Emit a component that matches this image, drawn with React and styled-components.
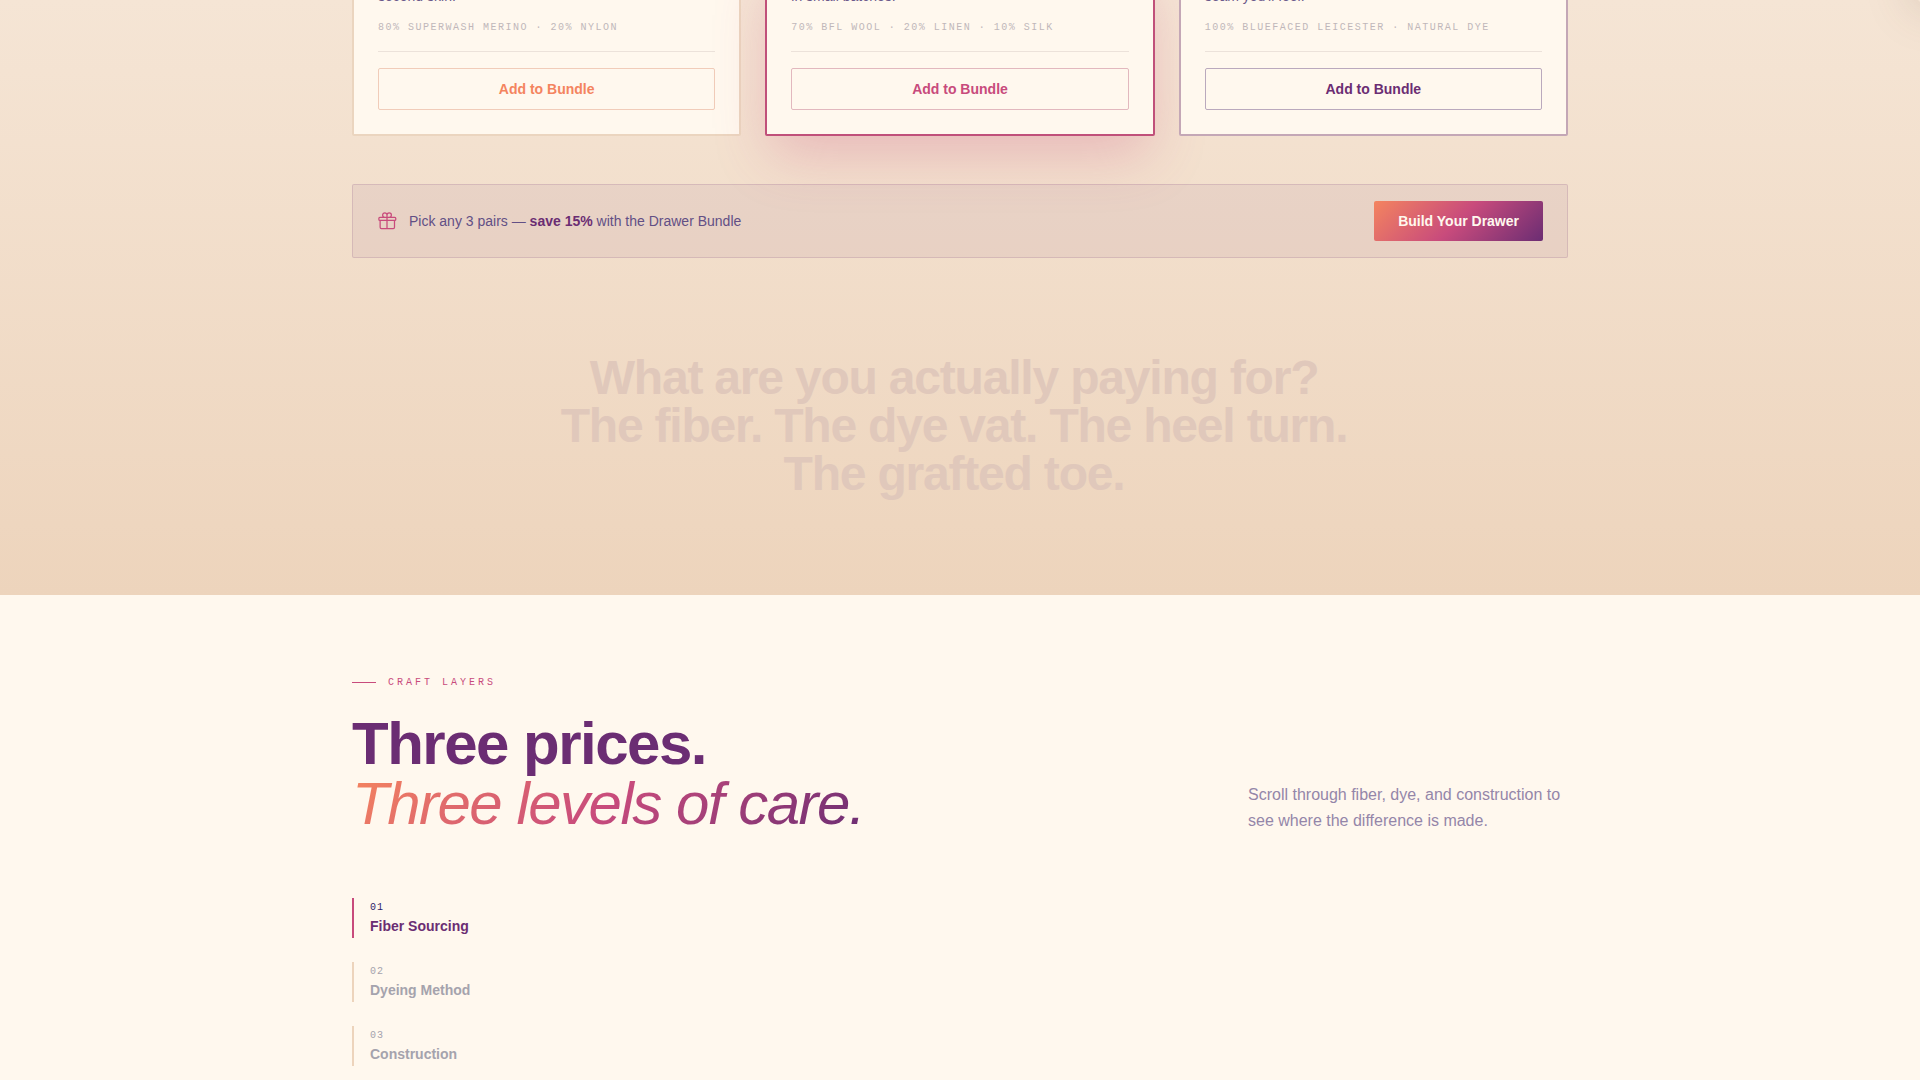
import styled, { createGlobalStyle } from "styled-components";

const GlobalStyle = createGlobalStyle`
  * {
    box-sizing: border-box;
  }
  body {
    margin: 0;
    background-color: #fff8ee;
    font-family: "Liberation Sans", Arial, sans-serif;
    color: #2d1b69;
  }
  h2, p, ol {
    margin: 0;
    padding: 0;
  }
`;

const sunset = "linear-gradient(135deg, #f4845f 0%, #c84b7c 50%, #6b2d73 100%)";
const mono = '"Liberation Mono", "Courier New", monospace';

const Shop = styled.section`
  position: relative;
  overflow: hidden;
  display: flex;
  flex-direction: column;
  background: linear-gradient(180deg, #f5e5d5 0%, #edd4bc 100%);
`;

const Glow = styled.div`
  position: absolute;
  top: -40px;
  right: -40px;
  width: 48px;
  height: 48px;
  border-radius: 50%;
  box-shadow: 0 0 48px rgba(107, 75, 60, 0.25);
`;

const Container = styled.div`
  width: 100%;
  max-width: 1280px;
  margin: 0 auto;
  padding: 0 32px;
`;

const Products = styled.div`
  display: grid;
  grid-template-columns: repeat(3, 1fr);
  gap: 24px;
  margin-top: -41px;
`;

const Card = styled.article`
  padding: 24px;
  background-color: #fff8ee;
  border: 2px solid ${(props) => props.$border};
  border-radius: 2px;
  box-shadow: ${(props) =>
    props.$featured ? "0 24px 56px -6px rgba(200, 75, 124, 0.28)" : "none"};
`;

const Description = styled.p`
  font-size: 14px;
  line-height: 23px;
  color: #6c5a8b;
`;

const Fiber = styled.p`
  margin-top: 12px;
  padding-bottom: 16px;
  border-bottom: 1px solid #ece2da;
  font-family: ${mono};
  font-size: 10px;
  line-height: 15px;
  letter-spacing: 0.15em;
  text-transform: uppercase;
  color: #c0b7ba;
`;

const AddButton = styled.button`
  width: 100%;
  height: 42px;
  margin-top: 16px;
  font-family: inherit;
  font-size: 14px;
  font-weight: 700;
  color: ${(props) => props.$color};
  background-color: transparent;
  border: 1px solid ${(props) => props.$border};
  border-radius: 2px;
  cursor: pointer;
`;

const Banner = styled.div`
  display: flex;
  align-items: center;
  justify-content: space-between;
  margin-top: 48px;
  padding: 16px 24px;
  background-color: rgba(107, 45, 115, 0.07);
  border: 1px solid rgba(107, 45, 115, 0.15);
  border-radius: 2px;
`;

const Offer = styled.div`
  display: flex;
  align-items: center;
  gap: 12px;
  font-size: 14px;
  line-height: 20px;
  color: #624f85;

  b {
    color: #6b2d73;
  }
`;

const BuildButton = styled.button`
  height: 40px;
  padding: 0 24px;
  font-family: inherit;
  font-size: 14px;
  font-weight: 700;
  color: #fff8ee;
  background: ${sunset};
  border: none;
  border-radius: 2px;
  cursor: pointer;
`;

const Question = styled.p`
  padding: 96px 12px 97px 0;
  font-size: 48px;
  font-weight: 700;
  line-height: 48px;
  letter-spacing: -0.025em;
  text-align: center;
  color: #e0c8bb;
`;

const Craft = styled.section`
  padding: 80px 0;
`;

const Label = styled.div`
  display: flex;
  align-items: center;
  gap: 12px;
  font-family: ${mono};
  font-size: 10px;
  line-height: 15px;
  letter-spacing: 0.3em;
  text-transform: uppercase;
  color: #c84b7c;

  &::before {
    content: "";
    width: 24px;
    height: 1px;
    background-color: #c84b7c;
  }
`;

const Intro = styled.div`
  display: flex;
  align-items: flex-end;
  justify-content: space-between;
  margin: 24px 0 64px;
`;

const Title = styled.h2`
  font-size: 60px;
  font-weight: 700;
  line-height: 60px;
  letter-spacing: -0.025em;
  color: #6b2d73;
`;

const Accent = styled.em`
  display: block;
  font-weight: 400;
  background: ${sunset};
  background-clip: text;
  -webkit-background-clip: text;
  color: transparent;
`;

const Lead = styled.p`
  width: 320px;
  font-size: 16px;
  line-height: 26px;
  color: #9486a9;
`;

const Layers = styled.ol`
  display: flex;
  flex-direction: column;
  gap: 24px;
  list-style: none;
`;

const Layer = styled.li`
  padding: 2px 0 2px 16px;
  border-left: 2px solid ${(props) => (props.$active ? "#c84b7c" : "#edd4bc")};
  color: ${(props) => (props.$active ? "#6b2d73" : "#a5a3ad")};
`;

const LayerNumber = styled.div`
  font-family: ${mono};
  font-size: 10px;
  line-height: 16px;
  letter-spacing: 0.1em;
  color: ${(props) => (props.$active ? "#2d1b69" : "#a5a3ad")};
`;

const LayerName = styled.div`
  font-size: 14px;
  font-weight: 700;
  line-height: 20px;
`;

const products = [
  {
    id: 1,
    description: "second skin.",
    fiber: "80% Superwash Merino · 20% Nylon",
    color: "#f4845f",
    border: "#ebd5bf",
    buttonBorder: "#f1ccb9",
  },
  {
    id: 2,
    description: "in small batches.",
    fiber: "70% BFL Wool · 20% Linen · 10% Silk",
    color: "#c84b7c",
    border: "#c0507a",
    buttonBorder: "#e2b8be",
    featured: true,
  },
  {
    id: 3,
    description: "seam you'll feel.",
    fiber: "100% Bluefaced Leicester · Natural Dye",
    color: "#6b2d73",
    border: "#c4a7b6",
    buttonBorder: "#baa9bd",
  },
];

const layers = ["Fiber Sourcing", "Dyeing Method", "Construction"];

const GiftIcon = () => (
  <svg
    width="20"
    height="20"
    viewBox="0 0 24 24"
    fill="none"
    stroke="#c84b7c"
    strokeWidth="1.5"
    strokeLinecap="round"
    strokeLinejoin="round"
    aria-hidden="true"
  >
    <path d="M21 11.25v8.25a1.5 1.5 0 0 1-1.5 1.5H5.25a1.5 1.5 0 0 1-1.5-1.5v-8.25M12 4.875A2.625 2.625 0 1 0 9.375 7.5H12m0-2.625V7.5m0-2.625A2.625 2.625 0 1 1 14.625 7.5H12m0 0V21m-8.625-9.75h18c.621 0 1.125-.504 1.125-1.125v-1.5c0-.621-.504-1.125-1.125-1.125h-18c-.621 0-1.125.504-1.125 1.125v1.5c0 .621.504 1.125 1.125 1.125Z" />
  </svg>
);

const App = () => {
  return (
    <main>
      <GlobalStyle />
      <Shop>
        <Glow />
        <Container>
          <Products>
            {products.map((item) => (
              <Card key={item.id} $border={item.border} $featured={item.featured}>
                <Description>{item.description}</Description>
                <Fiber>{item.fiber}</Fiber>
                <AddButton $color={item.color} $border={item.buttonBorder}>
                  Add to Bundle
                </AddButton>
              </Card>
            ))}
          </Products>
          <Banner>
            <Offer>
              <GiftIcon />
              <span>
                Pick any 3 pairs — <b>save 15%</b> with the Drawer Bundle
              </span>
            </Offer>
            <BuildButton>Build Your Drawer</BuildButton>
          </Banner>
          <Question>
            What are you actually paying for?
            <br />
            The fiber. The dye vat. The heel turn.
            <br />
            The grafted toe.
          </Question>
        </Container>
      </Shop>
      <Craft>
        <Container>
          <Label>Craft Layers</Label>
          <Intro>
            <Title>
              Three prices.
              <Accent>Three levels of care.</Accent>
            </Title>
            <Lead>
              Scroll through fiber, dye, and construction to see where the
              difference is made.
            </Lead>
          </Intro>
          <Layers>
            {layers.map((name, index) => (
              <Layer key={name} $active={index === 0}>
                <LayerNumber $active={index === 0}>0{index + 1}</LayerNumber>
                <LayerName>{name}</LayerName>
              </Layer>
            ))}
          </Layers>
        </Container>
      </Craft>
    </main>
  );
};

export default App;
